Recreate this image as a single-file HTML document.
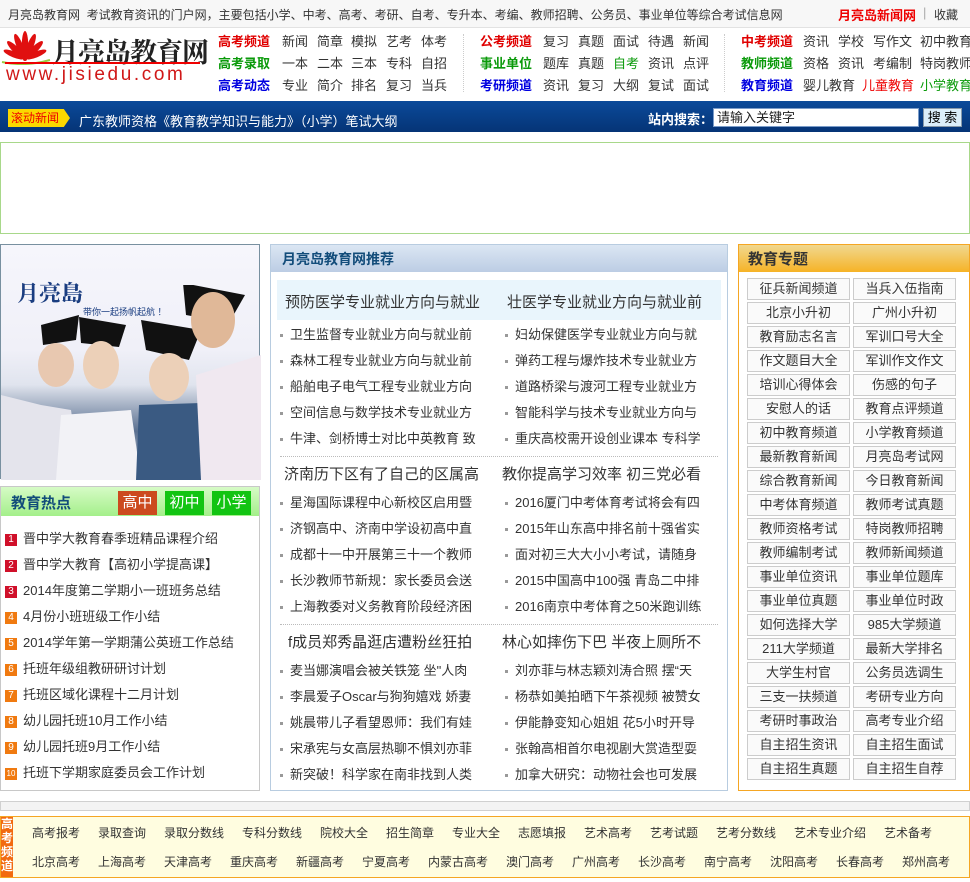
<!DOCTYPE html>
<html><head><meta charset="utf-8">
<style>
*{margin:0;padding:0;box-sizing:border-box}
body{width:970px;height:882px;position:relative;background:#fff;font-family:"Liberation Sans","Noto Sans CJK SC","WenQuanYi Zen Hei",sans-serif;font-size:13px;color:#333;overflow:hidden}
.a{position:absolute;white-space:nowrap}
.top{left:0;top:0;width:970px;height:28px;background:#f7f7f7;border-bottom:1px solid #e2e2e2}
.nav span{position:absolute;white-space:nowrap;font-size:13px}
.r{color:#e00000;font-weight:bold}.g{color:#0a9a0a;font-weight:bold}.b{color:#0000e0;font-weight:bold}
.bar{left:0;top:101px;width:970px;height:31px;background:linear-gradient(#0b4a9a,#053476)}
.ml li{position:absolute;list-style:none;white-space:nowrap;font-size:13px;color:#333}
.ml li:before{content:"";display:inline-block;width:3px;height:3px;background:#999;margin-right:7px;vertical-align:middle}
.hl{position:absolute;font-size:15px;color:#333;white-space:nowrap}
.dot{position:absolute;left:280px;width:438px;border-top:1px dotted #bbb}
.cell{position:absolute;width:103px;height:22px;border:1px solid #ccc;background:#fafafa;text-align:center;line-height:20px;font-size:13px;color:#333}
.num{display:inline-block;width:12px;height:12px;color:#fff;font-size:10px;line-height:12px;text-align:center;margin-right:6px;vertical-align:1px}
.hot div{position:absolute;left:5px;white-space:nowrap;font-size:13px;color:#333}
.bt span{position:absolute;font-size:12px;color:#333;white-space:nowrap}
</style></head><body>
<div class="a top"></div>
<div class="a" style="left:8px;top:6px;font-size:12px;color:#333">月亮岛教育网&nbsp; 考试教育资讯的门户网，主要包括小学、中考、高考、考研、自考、专升本、考编、教师招聘、公务员、事业单位等综合考试信息网</div>
<div class="a" style="left:838px;top:5px;font-size:13px;color:#e00;font-weight:bold">月亮岛新闻网</div>
<div class="a" style="left:923px;top:5px;font-size:13px;color:#aaa">|</div>
<div class="a" style="left:934px;top:6px;font-size:12px;color:#333">收藏</div>

<!-- logo -->
<svg class="a" style="left:0;top:29px" width="60" height="36" viewBox="0 0 60 36">
<g fill="#e01010">
<ellipse cx="25" cy="30" rx="3.2" ry="14" transform="rotate(0 25 30) translate(0 -14)"/>
<ellipse cx="25" cy="30" rx="3.2" ry="13" transform="rotate(-22 25 30) translate(0 -14)"/>
<ellipse cx="25" cy="30" rx="3.2" ry="13" transform="rotate(22 25 30) translate(0 -14)"/>
<ellipse cx="25" cy="30" rx="3.2" ry="12" transform="rotate(-45 25 30) translate(0 -13)"/>
<ellipse cx="25" cy="30" rx="3.2" ry="12" transform="rotate(45 25 30) translate(0 -13)"/>
<ellipse cx="25" cy="30" rx="3" ry="11" transform="rotate(-68 25 30) translate(0 -12)"/>
<ellipse cx="25" cy="30" rx="3" ry="11" transform="rotate(68 25 30) translate(0 -12)"/>
</g><circle cx="25" cy="30" r="2" fill="#e01010"/><path d="M2 33 Q25 38 50 31" stroke="#9c4" stroke-width="2" fill="none"/></svg>
<div class="a" style="left:52px;top:31px;font-size:27px;font-weight:bold;color:#222;font-family:'Noto Serif CJK SC',serif;letter-spacing:-1px">月亮岛教育网</div>
<div class="a" style="left:5px;top:62px;width:195px;height:2px;background:#e00"></div>
<div class="a" style="left:6px;top:64px;font-size:19px;color:#d01818;letter-spacing:2.6px;font-family:'Liberation Sans',sans-serif">www.jisiedu.com</div>

<div class="nav">
<span class="r" style="left:218px;top:31px">高考频道</span><span style="left:282px;top:31px">新闻</span><span style="left:317px;top:31px">简章</span><span style="left:351px;top:31px">模拟</span><span style="left:386px;top:31px">艺考</span><span style="left:421px;top:31px">体考</span>
<span class="g" style="left:218px;top:53px">高考录取</span><span style="left:282px;top:53px">一本</span><span style="left:317px;top:53px">二本</span><span style="left:351px;top:53px">三本</span><span style="left:386px;top:53px">专科</span><span style="left:421px;top:53px">自招</span>
<span class="b" style="left:218px;top:75px">高考动态</span><span style="left:282px;top:75px">专业</span><span style="left:317px;top:75px">简介</span><span style="left:351px;top:75px">排名</span><span style="left:386px;top:75px">复习</span><span style="left:421px;top:75px">当兵</span>
<span class="r" style="left:480px;top:31px">公考频道</span><span style="left:543px;top:31px">复习</span><span style="left:578px;top:31px">真题</span><span style="left:613px;top:31px">面试</span><span style="left:648px;top:31px">待遇</span><span style="left:683px;top:31px">新闻</span>
<span class="g" style="left:480px;top:53px">事业单位</span><span style="left:543px;top:53px">题库</span><span style="left:578px;top:53px">真题</span><span style="left:613px;top:53px;color:#0a9a0a">自考</span><span style="left:648px;top:53px">资讯</span><span style="left:683px;top:53px">点评</span>
<span class="b" style="left:480px;top:75px">考研频道</span><span style="left:543px;top:75px">资讯</span><span style="left:578px;top:75px">复习</span><span style="left:613px;top:75px">大纲</span><span style="left:648px;top:75px">复试</span><span style="left:683px;top:75px">面试</span>
<span class="r" style="left:741px;top:31px">中考频道</span><span style="left:803px;top:31px">资讯</span><span style="left:838px;top:31px">学校</span><span style="left:873px;top:31px">写作文</span><span style="left:920px;top:31px">初中教育</span>
<span class="g" style="left:741px;top:53px">教师频道</span><span style="left:803px;top:53px">资格</span><span style="left:838px;top:53px">资讯</span><span style="left:873px;top:53px">考编制</span><span style="left:920px;top:53px">特岗教师</span>
<span class="b" style="left:741px;top:75px">教育频道</span><span style="left:803px;top:75px">婴儿教育</span><span style="left:862px;top:75px;color:#e00">儿童教育</span><span style="left:920px;top:75px;color:#0a9a0a">小学教育</span>
</div>
<div class="a" style="left:463px;top:34px;height:58px;border-left:1px dotted #ccc"></div>
<div class="a" style="left:724px;top:34px;height:58px;border-left:1px dotted #ccc"></div>

<div class="a bar"></div>
<div class="a" style="left:8px;top:109px;width:62px;height:18px;background:#fbd800;color:#e00;font-size:12px;line-height:18px;padding-left:3px;clip-path:polygon(0 0,90% 0,100% 50%,90% 100%,0 100%)">滚动新闻</div>
<div class="a" style="left:79px;top:111px;color:#fff;font-size:13px">广东教师资格《教育教学知识与能力》（小学）笔试大纲</div>
<div class="a" style="left:648px;top:109px;color:#fff;font-size:13px;font-weight:bold">站内搜索：</div>
<div class="a" style="left:713px;top:108px;width:206px;height:19px;background:#fff;border:1px solid #7a9cc9;font-size:13px;line-height:17px;padding-left:3px;color:#222">请输入关键字</div>
<div class="a" style="left:923px;top:108px;width:39px;height:19px;background:#dceefa;border:1px solid #89a;font-size:13px;line-height:17px;text-align:center;color:#000">搜 索</div>

<div class="a" style="left:0;top:142px;width:970px;height:92px;border:1px solid #a8d88a"></div>

<!-- left -->
<div class="a" style="left:0;top:244px;width:260px;height:235px;border:1px solid #7890a0;background:linear-gradient(#f6f6fc 0%,#f0f0f8 45%,#e0e4ee 60%,#5a7090 80%,#d8dce4 100%)">
<div style="position:absolute;left:16px;top:32px;font-size:22px;color:#1a3d80;font-weight:bold;font-family:'Noto Serif CJK SC',serif">月亮島</div>
<div style="position:absolute;left:82px;top:60px;font-size:9px;color:#1a3d80">带你一起扬帆起航 ！</div>
<svg style="position:absolute;left:0;top:40px" width="260" height="195" viewBox="0 0 260 195">
<polygon points="182,-2 244,10 228,38 185,30" fill="#111"/>
<polygon points="40,40 78,30 75,55 42,60" fill="#111"/><polygon points="78,32 125,40 118,62 80,58" fill="#111"/><polygon points="140,35 200,45 188,75 145,65" fill="#111"/>
<ellipse cx="55" cy="80" rx="18" ry="22" fill="#e8c8b0"/><ellipse cx="100" cy="80" rx="18" ry="24" fill="#ecd0b8"/><ellipse cx="168" cy="92" rx="20" ry="24" fill="#ecd0b8"/><ellipse cx="212" cy="35" rx="22" ry="28" fill="#e0b898"/>
<path d="M0 110 L40 120 L70 125 L80 195 L0 195Z" fill="#e4e4ec"/><path d="M60 130 L130 125 L140 195 L55 195Z" fill="#f2f2f6"/><path d="M138 120 L200 118 L205 195 L135 195Z" fill="#3a5a82"/><path d="M195 90 L260 70 L260 195 L200 195Z" fill="#f0e8f0"/>
</svg></div>
<div class="a" style="left:0;top:486px;width:260px;height:305px;border:1px solid #c8c8c8"></div>
<div class="a" style="left:1px;top:487px;width:258px;height:29px;background:linear-gradient(#d6fbc6,#a4ef8a)"></div>
<div class="a" style="left:11px;top:492px;font-size:15px;font-weight:bold;color:#124c7a">教育热点</div>
<div class="a" style="left:118px;top:491px;width:39px;height:24px;background:#cc4a1e;color:#fff;font-size:15px;line-height:24px;text-align:center">高中</div>
<div class="a" style="left:165px;top:491px;width:39px;height:24px;background:#12c412;color:#fff;font-size:15px;line-height:24px;text-align:center">初中</div>
<div class="a" style="left:212px;top:491px;width:39px;height:24px;background:#12c412;color:#fff;font-size:15px;line-height:24px;text-align:center">小学</div>
<div class="hot">
<div style="top:528px"><span class="num" style="background:#d0102a">1</span>晋中学大教育春季班精品课程介绍</div>
<div style="top:554px"><span class="num" style="background:#d0102a">2</span>晋中学大教育【高初小学提高课】</div>
<div style="top:580px"><span class="num" style="background:#d0102a">3</span>2014年度第二学期小一班班务总结</div>
<div style="top:606px"><span class="num" style="background:#f07a10">4</span>4月份小班班级工作小结</div>
<div style="top:632px"><span class="num" style="background:#f07a10">5</span>2014学年第一学期蒲公英班工作总结</div>
<div style="top:658px"><span class="num" style="background:#f07a10">6</span>托班年级组教研研讨计划</div>
<div style="top:684px"><span class="num" style="background:#f07a10">7</span>托班区域化课程十二月计划</div>
<div style="top:710px"><span class="num" style="background:#f07a10">8</span>幼儿园托班10月工作小结</div>
<div style="top:736px"><span class="num" style="background:#f07a10">9</span>幼儿园托班9月工作小结</div>
<div style="top:762px"><span class="num" style="background:#f07a10;font-size:8px">10</span>托班下学期家庭委员会工作计划</div>
</div>

<!-- middle -->
<div class="a" style="left:270px;top:244px;width:458px;height:547px;border:1px solid #b8cce0"></div>
<div class="a" style="left:271px;top:245px;width:456px;height:27px;background:linear-gradient(#dbe6f3,#bccde4)"></div>
<div class="a" style="left:282px;top:249px;font-size:14px;font-weight:bold;color:#124c7a">月亮岛教育网推荐</div>
<div class="a" style="left:277px;top:280px;width:444px;height:40px;background:#e9f5fc"></div>
<div class="hl" style="left:285px;top:291px">预防医学专业就业方向与就业</div>
<div class="hl" style="left:507px;top:291px">壮医学专业就业方向与就业前</div>
<ul class="ml">
<li style="left:280px;top:324px">卫生监督专业就业方向与就业前</li><li style="left:505px;top:324px">妇幼保健医学专业就业方向与就</li>
<li style="left:280px;top:350px">森林工程专业就业方向与就业前</li><li style="left:505px;top:350px">弹药工程与爆炸技术专业就业方</li>
<li style="left:280px;top:376px">船舶电子电气工程专业就业方向</li><li style="left:505px;top:376px">道路桥梁与渡河工程专业就业方</li>
<li style="left:280px;top:402px">空间信息与数学技术专业就业方</li><li style="left:505px;top:402px">智能科学与技术专业就业方向与</li>
<li style="left:280px;top:428px">牛津、剑桥博士对比中英教育 致</li><li style="left:505px;top:428px">重庆高校需开设创业课本 专科学</li>
</ul>
<div class="dot" style="top:456px"></div>
<div class="hl" style="left:284px;top:463px">济南历下区有了自己的区属高</div>
<div class="hl" style="left:502px;top:463px">教你提高学习效率 初三党必看</div>
<ul class="ml">
<li style="left:280px;top:492px">星海国际课程中心新校区启用暨</li><li style="left:505px;top:492px">2016厦门中考体育考试将会有四</li>
<li style="left:280px;top:518px">济钢高中、济南中学设初高中直</li><li style="left:505px;top:518px">2015年山东高中排名前十强省实</li>
<li style="left:280px;top:544px">成都十一中开展第三十一个教师</li><li style="left:505px;top:544px">面对初三大大小小考试，请随身</li>
<li style="left:280px;top:570px">长沙教师节新规：家长委员会送</li><li style="left:505px;top:570px">2015中国高中100强 青岛二中排</li>
<li style="left:280px;top:596px">上海教委对义务教育阶段经济困</li><li style="left:505px;top:596px">2016南京中考体育之50米跑训练</li>
</ul>
<div class="dot" style="top:624px"></div>
<div class="hl" style="left:288px;top:631px">f成员郑秀晶逛店遭粉丝狂拍</div>
<div class="hl" style="left:502px;top:631px">林心如摔伤下巴 半夜上厕所不</div>
<ul class="ml">
<li style="left:280px;top:660px">麦当娜演唱会被关铁笼 坐"人肉</li><li style="left:505px;top:660px">刘亦菲与林志颖刘涛合照 摆“天</li>
<li style="left:280px;top:686px">李晨爱子Oscar与狗狗嬉戏 娇妻</li><li style="left:505px;top:686px">杨恭如美拍晒下午茶视频 被赞女</li>
<li style="left:280px;top:712px">姚晨带儿子看望恩师：我们有娃</li><li style="left:505px;top:712px">伊能静变知心姐姐 花5小时开导</li>
<li style="left:280px;top:738px">宋承宪与女高层热聊不惧刘亦菲</li><li style="left:505px;top:738px">张翰高相首尔电视剧大赏造型耍</li>
<li style="left:280px;top:764px">新突破！科学家在南非找到人类</li><li style="left:505px;top:764px">加拿大研究：动物社会也可发展</li>
</ul>

<!-- right -->
<div class="a" style="left:738px;top:244px;width:232px;height:547px;border:1px solid #f5a623"></div>
<div class="a" style="left:739px;top:245px;width:230px;height:27px;background:linear-gradient(#f0d890,#f6b326)"></div>
<div class="a" style="left:748px;top:248px;font-size:15px;font-weight:bold;color:#333">教育专题</div>
<div class="cell" style="left:747px;top:278px">征兵新闻频道</div><div class="cell" style="left:853px;top:278px">当兵入伍指南</div>
<div class="cell" style="left:747px;top:302px">北京小升初</div><div class="cell" style="left:853px;top:302px">广州小升初</div>
<div class="cell" style="left:747px;top:326px">教育励志名言</div><div class="cell" style="left:853px;top:326px">军训口号大全</div>
<div class="cell" style="left:747px;top:350px">作文题目大全</div><div class="cell" style="left:853px;top:350px">军训作文作文</div>
<div class="cell" style="left:747px;top:374px">培训心得体会</div><div class="cell" style="left:853px;top:374px">伤感的句子</div>
<div class="cell" style="left:747px;top:398px">安慰人的话</div><div class="cell" style="left:853px;top:398px">教育点评频道</div>
<div class="cell" style="left:747px;top:422px">初中教育频道</div><div class="cell" style="left:853px;top:422px">小学教育频道</div>
<div class="cell" style="left:747px;top:446px">最新教育新闻</div><div class="cell" style="left:853px;top:446px">月亮岛考试网</div>
<div class="cell" style="left:747px;top:470px">综合教育新闻</div><div class="cell" style="left:853px;top:470px">今日教育新闻</div>
<div class="cell" style="left:747px;top:494px">中考体育频道</div><div class="cell" style="left:853px;top:494px">教师考试真题</div>
<div class="cell" style="left:747px;top:518px">教师资格考试</div><div class="cell" style="left:853px;top:518px">特岗教师招聘</div>
<div class="cell" style="left:747px;top:542px">教师编制考试</div><div class="cell" style="left:853px;top:542px">教师新闻频道</div>
<div class="cell" style="left:747px;top:566px">事业单位资讯</div><div class="cell" style="left:853px;top:566px">事业单位题库</div>
<div class="cell" style="left:747px;top:590px">事业单位真题</div><div class="cell" style="left:853px;top:590px">事业单位时政</div>
<div class="cell" style="left:747px;top:614px">如何选择大学</div><div class="cell" style="left:853px;top:614px">985大学频道</div>
<div class="cell" style="left:747px;top:638px">211大学频道</div><div class="cell" style="left:853px;top:638px">最新大学排名</div>
<div class="cell" style="left:747px;top:662px">大学生村官</div><div class="cell" style="left:853px;top:662px">公务员选调生</div>
<div class="cell" style="left:747px;top:686px">三支一扶频道</div><div class="cell" style="left:853px;top:686px">考研专业方向</div>
<div class="cell" style="left:747px;top:710px">考研时事政治</div><div class="cell" style="left:853px;top:710px">高考专业介绍</div>
<div class="cell" style="left:747px;top:734px">自主招生资讯</div><div class="cell" style="left:853px;top:734px">自主招生面试</div>
<div class="cell" style="left:747px;top:758px">自主招生真题</div><div class="cell" style="left:853px;top:758px">自主招生自荐</div>

<!-- bottom -->
<div class="a" style="left:0;top:801px;width:970px;height:10px;background:#f3f3f3;border:1px solid #d0d0d0"></div>
<div class="a" style="left:0;top:816px;width:970px;height:62px;background:#fffde0;border:1px solid #f5a623"></div>
<div class="a" style="left:1px;top:817px;width:12px;height:60px;background:#f26a10;color:#fff;font-size:12px;line-height:14px;text-align:center;white-space:normal;font-weight:bold">高考频道</div>
<div class="bt">
<span style="left:32px;top:824px">高考报考</span><span style="left:98px;top:824px">录取查询</span><span style="left:164px;top:824px">录取分数线</span><span style="left:242px;top:824px">专科分数线</span><span style="left:320px;top:824px">院校大全</span><span style="left:386px;top:824px">招生简章</span><span style="left:452px;top:824px">专业大全</span><span style="left:518px;top:824px">志愿填报</span><span style="left:584px;top:824px">艺术高考</span><span style="left:650px;top:824px">艺考试题</span><span style="left:716px;top:824px">艺考分数线</span><span style="left:794px;top:824px">艺术专业介绍</span><span style="left:884px;top:824px">艺术备考</span>
<span style="left:32px;top:853px">北京高考</span><span style="left:98px;top:853px">上海高考</span><span style="left:164px;top:853px">天津高考</span><span style="left:230px;top:853px">重庆高考</span><span style="left:296px;top:853px">新疆高考</span><span style="left:362px;top:853px">宁夏高考</span><span style="left:428px;top:853px">内蒙古高考</span><span style="left:506px;top:853px">澳门高考</span><span style="left:572px;top:853px">广州高考</span><span style="left:638px;top:853px">长沙高考</span><span style="left:704px;top:853px">南宁高考</span><span style="left:770px;top:853px">沈阳高考</span><span style="left:836px;top:853px">长春高考</span><span style="left:902px;top:853px">郑州高考</span>
</div>
</body></html>
